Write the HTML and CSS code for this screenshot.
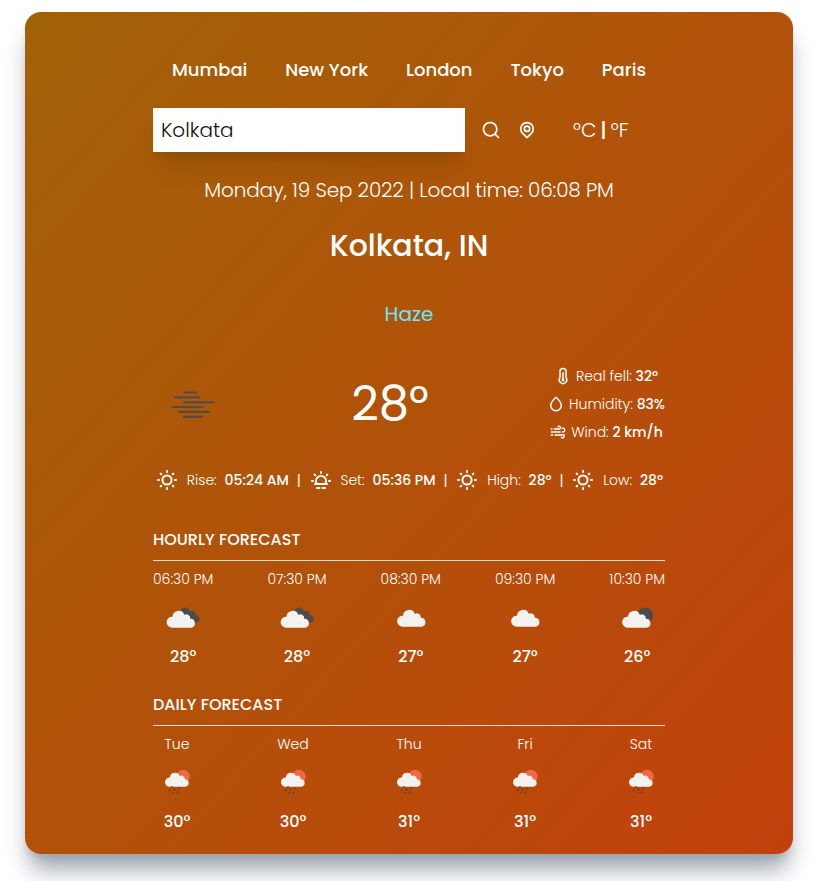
FILE: index.html
```html
<!DOCTYPE html>
<html lang="en">
<head>
<meta charset="utf-8">
<title>Weather</title>
<link rel="stylesheet" href="styles.css">
</head>
<body>
<svg class="defs" width="0" height="0">
  <defs>
    <symbol id="sun" viewBox="0 0 24 24"><g fill="none" stroke="currentColor" stroke-width="2" stroke-linecap="round"><circle cx="12" cy="12" r="4.600"/><path d="M12 3v1M12 20v1M3 12h1M20 12h1M5.600 5.600l.7.7M17.700 17.700l.7.7M5.600 18.400l.7-.7M17.700 6.300l.7-.7"/></g></symbol>
    <symbol id="sunset" viewBox="0 0 24 24"><g fill="none" stroke="currentColor" stroke-width="2" stroke-linecap="round"><path d="M8 16a5 5 0 1 1 8 0M6 16h12M8 20h2.500M13.500 20h2.500M12 4v1M3 13h1M20 13h1M5.600 6.600l.7.7M17.700 7.300l.7-.7"/></g></symbol>
    <symbol id="cloud" viewBox="0 0 30 20"><path fill="#f2f2f0" d="M6 19A5.300 5.300 0 0 1 6.800 8.400A5.900 5.900 0 0 1 18.300 6.800A3.700 3.700 0 0 1 24 10.300A4.400 4.400 0 0 1 25 19Z"/></symbol>
    <symbol id="broken" viewBox="0 0 36 24"><g fill="#4b4b4b"><circle cx="20" cy="6.500" r="5"/><circle cx="27" cy="8.500" r="3.600"/><circle cx="31" cy="12.800" r="3.600"/><path d="M20 6l8 1 4 8-9 2Z"/></g><use href="#cloud" x="0.500" y="2" width="31" height="20.700"/></symbol>
    <symbol id="few" viewBox="0 0 36 24"><circle cx="24" cy="9.500" r="8" fill="#4b4b4b"/><use href="#cloud" x="0" y="2" width="31" height="20.700"/></symbol>
    <symbol id="rain" viewBox="0 0 28 28"><circle cx="20" cy="8.500" r="6.800" fill="#ee6946"/><use href="#cloud" x="1" y="2.300" width="26" height="17.300"/><path fill="none" stroke="#554337" stroke-width="1.400" d="M9 18v1.200M7.300 21l-.8 2M12 20.500l-.7 2M10.500 24l-.4 1.300M16.300 19.500l-.5 1.500M14.800 23.500l-.6 2"/></symbol>
  </defs>
</svg>
<main class="card">
  <nav class="cities"><button>Mumbai</button><button>New York</button><button>London</button><button>Tokyo</button><button>Paris</button></nav>
  <div class="search">
    <div class="field">Kolkata</div>
    <svg class="i20 find" viewBox="0 0 24 24"><path fill="currentColor" d="M21.710,20.290,18,16.610A9,9,0,1,0,16.610,18l3.680,3.680a1,1,0,0,0,1.420,0A1,1,0,0,0,21.710,20.290ZM11,18a7,7,0,1,1,7-7A7,7,0,0,1,11,18Z"/></svg>
    <svg class="i20 locate" viewBox="0 0 24 24"><g fill="none" stroke="currentColor" stroke-width="2" stroke-linejoin="round"><path d="M12 21.200l-5.200-5.200a7.500 7.500 0 1 1 10.400 0Z"/><circle cx="12" cy="10.500" r="3.200"/></g></svg>
    <div class="units"><span>°C</span><b>|</b><span>°F</span></div>
  </div>
  <p class="time">Monday, 19 Sep 2022 | Local time: 06:08 PM</p>
  <h1>Kolkata, IN</h1>
  <p class="state">Haze</p>
  <section class="now">
    <svg class="haze" viewBox="0 0 46 28"><path fill="none" stroke="#554b45" stroke-width="2.200" stroke-linecap="round" d="M14.500 1.500h12M5 6.400h24M14 11.300h29.500M2.500 16h30M9 20.900h30M14 25.800h18"/></svg>
    <div class="temp">28°</div>
    <div class="details">
      <div><svg class="i18" viewBox="0 0 24 24"><path fill="none" stroke="currentColor" stroke-width="2" d="M8 14V6a4 4 0 0 1 8 0v8a5 5 0 1 1-8 0Z"/><path fill="none" stroke="currentColor" stroke-width="2" d="M12 7v9"/><circle cx="12" cy="17.300" r="2" fill="currentColor"/></svg><span>Real fell: <b>32°</b></span></div>
      <div><svg class="i18" viewBox="0 0 24 24"><path fill="none" stroke="currentColor" stroke-width="2" stroke-linejoin="round" d="M12 3C8 6.500 5 10 5 14a7 7 0 0 0 14 0c0-4-3-7.500-7-11Z"/></svg><span>Humidity: <b>83%</b></span></div>
      <div><svg class="i18" viewBox="0 0 24 24"><path fill="none" stroke="currentColor" stroke-width="1.800" stroke-linecap="round" d="M3 8h1M7 8h6.500a1.800 1.800 0 1 0-1.500-2.700M3 12h12M18 12a2.600 2.600 0 1 0-.5-5M18 12h1M3 16h2M8 16h10a2 2 0 1 1-1.700 3M20 16h.5"/></svg><span>Wind: <b>2 km/h</b></span></div>
    </div>
  </section>
  <section class="sunrow">
    <svg class="i24" viewBox="0 0 24 24"><use href="#sun"/></svg><span>Rise:</span><b>05:24 AM</b><i>|</i>
    <svg class="i24" viewBox="0 0 24 24"><use href="#sunset"/></svg><span>Set:</span><b>05:36 PM</b><i>|</i>
    <svg class="i24" viewBox="0 0 24 24"><use href="#sun"/></svg><span>High:</span><b>28°</b><i>|</i>
    <svg class="i24" viewBox="0 0 24 24"><use href="#sun"/></svg><span>Low:</span><b>28°</b>
  </section>
  <h2>HOURLY FORECAST</h2>
  <section class="forecast">
    <div><span>06:30 PM</span><svg viewBox="0 0 36 24"><use href="#broken"/></svg><b>28°</b></div>
    <div><span>07:30 PM</span><svg viewBox="0 0 36 24"><use href="#broken"/></svg><b>28°</b></div>
    <div><span>08:30 PM</span><svg viewBox="0 0 36 24"><use href="#cloud" x="3" y="1" width="31" height="20.700"/></svg><b>27°</b></div>
    <div><span>09:30 PM</span><svg viewBox="0 0 36 24"><use href="#cloud" x="3" y="1" width="31" height="20.700"/></svg><b>27°</b></div>
    <div><span>10:30 PM</span><svg class="few" viewBox="0 0 36 24"><use href="#few"/></svg><b>26°</b></div>
  </section>
  <h2 class="second">DAILY FORECAST</h2>
  <section class="forecast daily">
    <div><span>Tue</span><svg viewBox="0 0 28 28"><use href="#rain"/></svg><b>30°</b></div>
    <div><span>Wed</span><svg viewBox="0 0 28 28"><use href="#rain"/></svg><b>30°</b></div>
    <div><span>Thu</span><svg viewBox="0 0 28 28"><use href="#rain"/></svg><b>31°</b></div>
    <div><span>Fri</span><svg viewBox="0 0 28 28"><use href="#rain"/></svg><b>31°</b></div>
    <div><span>Sat</span><svg viewBox="0 0 28 28"><use href="#rain"/></svg><b>31°</b></div>
  </section>
</main>
</body>
</html>
```
FILE: styles.css
```css
* { box-sizing: border-box; margin: 0; padding: 0; }
body { display: flow-root; min-height: 881px; background: #fff; font-family: Poppins, Inter, sans-serif; color: #fff; }
.defs { position: absolute; }
svg { display: block; flex: none; }
.card { width: 768px; height: 842px; margin: 12px 0 0 25px; padding: 40px 128px 0; border-radius: 16px; background: linear-gradient(to bottom right, #a16207, #c2410c); box-shadow: 0 20px 25px -5px #9ca3af, 0 8px 10px -6px #9ca3af; }
.cities { display: flex; justify-content: space-around; height: 36px; align-items: center; }
button { border: 0; background: none; color: inherit; font: 500 18px/28px Poppins, Inter, sans-serif; }
.search { display: flex; align-items: center; height: 44px; margin-top: 20px; }
.field { width: 312px; height: 44px; padding: 8px; background: #fff; color: #111; font-size: 20px; font-weight: 300; line-height: 28px; box-shadow: 0 20px 25px -5px #0000001a, 0 8px 10px -6px #0000001a; }
.i20 { width: 20px; height: 20px; }
.i18 { width: 18px; height: 18px; }
.i24 { width: 24px; height: 24px; }
.find { margin-left: 16px; }
.locate { margin-left: 16px; }
.units { display: flex; gap: 4px; margin-left: 36px; font-size: 20px; line-height: 28px; font-weight: 300; }
.units b { font-weight: 500; }
.time { margin-top: 24px; height: 28px; font-size: 20px; line-height: 28px; font-weight: 300; letter-spacing: -0.17px; text-align: center; }
h1 { margin-top: 24px; font-size: 30px; line-height: 36px; font-weight: 500; text-align: center; }
.state { margin-top: 36px; font-size: 20px; line-height: 28px; text-align: center; color: #67e8f9; }
.now { display: flex; justify-content: space-between; align-items: center; height: 84px; margin-top: 34px; }
.haze { width: 46px; height: 28px; margin: 2px 17px 0; }
.temp { font-size: 48px; line-height: 48px; }
.details { font-size: 14px; line-height: 28px; font-weight: 300; }
.details div { display: flex; align-items: center; justify-content: center; gap: 4px; }
b { font-weight: 500; }
i { font-style: normal; font-weight: 400; }
.sunrow { display: flex; align-items: center; height: 24px; margin-top: 22px; padding: 0 2px; font-size: 14px; font-weight: 300; justify-content: space-between; }
h2 { margin-top: 36px; font-size: 16px; line-height: 24px; font-weight: 500; height: 33px; border-bottom: 1px solid #fffc; }
.second { margin-top: 24px; }
.forecast { display: flex; justify-content: space-between; margin-top: 8px; font-size: 14px; font-weight: 300; }
.forecast div { display: flex; flex-direction: column; align-items: center; }
.forecast span { line-height: 20px; }
.forecast svg { width: 36px; height: 24px; margin: 17px 0 15px; }
.forecast .few { margin-left: 3px; }
.forecast b { font-size: 16px; line-height: 24px; }
.daily div { width: 48px; }
.daily svg { width: 28px; height: 28px; margin: 14px 0; }
```
